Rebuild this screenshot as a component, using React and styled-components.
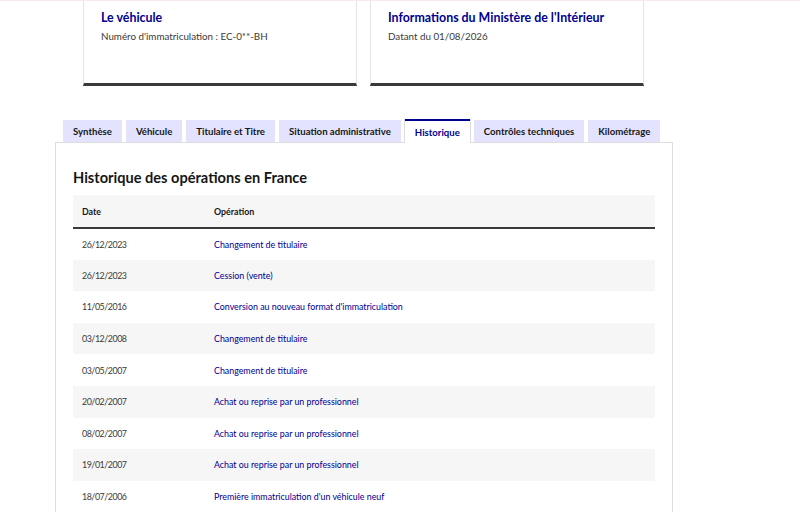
import React from "react";
import styled, { createGlobalStyle } from "styled-components";

const Global = createGlobalStyle`
  html, body { margin: 0; padding: 0; background: #fff; }
  body { font-family: Lato, "Noto Sans", sans-serif; color: #161616; }
  * { box-sizing: border-box; }
`;

const Page = styled.div`
  border-top: 1px solid #f4e9ee;
  width: 800px;
  height: 512px;
  overflow: hidden;
`;

const Cards = styled.div`
  display: flex;
  gap: 13px;
  padding-left: 83px;
`;

const Card = styled.div`
  width: 274px;
  height: 85px;
  border: 1px solid #e5e5e5;
  border-top: none;
  border-bottom: 3px solid #3a3a3a;
  padding: 8px 17px 0;
`;

const CardTitle = styled.div`
  font-size: 12.4px;
  font-weight: 700;
  color: #000091;
  line-height: 18px;
`;

const CardText = styled.div`
  margin-top: 1px;
  font-size: 9.8px;
  color: #3a3a3a;
  line-height: 16px;
`;

const Tabs = styled.div`
  display: flex;
  gap: 4px;
  margin: 33px 0 0 63px;
  position: relative;
  z-index: 1;
`;

const Tab = styled.div`
  height: ${(p) => (p.$active ? "24px" : "22px")};
  margin-top: ${(p) => (p.$active ? "0" : "1px")};
  padding: 0 10px;
  display: flex;
  align-items: center;
  font-size: 9.6px;
  font-weight: 700;
  color: ${(p) => (p.$active ? "#000091" : "#161616")};
  background: ${(p) => (p.$active ? "#fff" : "#e3e3fd")};
  border-top: ${(p) => (p.$active ? "2px solid #000091" : "none")};
  box-shadow: ${(p) => (p.$active ? "-1px 0 0 #ddd, 1px 0 0 #ddd" : "none")};
`;

const Panel = styled.div`
  margin: -1px 0 0 55px;
  width: 618px;
  height: 400px;
  border: 1px solid #dddddd;
  padding: 24px 17px 0;
`;

const Heading = styled.h2`
  margin: 0 0 6px;
  font-size: 14.6px;
  font-weight: 700;
  line-height: 22px;
  color: #161616;
`;

const Table = styled.table`
  width: 582px;
  border-collapse: collapse;
  font-size: 8.85px;
`;

const Th = styled.th`
  text-align: left;
  font-weight: 700;
  height: 33px;
  padding: 0 9px;
  background: #f6f6f6;
  border-bottom: 2px solid #3a3a3a;
  color: #161616;
  width: ${(p) => p.$w || "auto"};
`;

const Tr = styled.tr`
  height: 31.6px;
  background: ${(p) => (p.$odd ? "#f6f6f6" : "#fff")};
`;

const Td = styled.td`
  padding: 0 9px;
  color: ${(p) => (p.$link ? "#000091" : "#3a3a3a")};
  letter-spacing: ${(p) => (p.$link ? "0" : "-0.45px")};
`;

const rows = [
  ["26/12/2023", "Changement de titulaire"],
  ["26/12/2023", "Cession (vente)"],
  ["11/05/2016", "Conversion au nouveau format d'immatriculation"],
  ["03/12/2008", "Changement de titulaire"],
  ["03/05/2007", "Changement de titulaire"],
  ["20/02/2007", "Achat ou reprise par un professionnel"],
  ["08/02/2007", "Achat ou reprise par un professionnel"],
  ["19/01/2007", "Achat ou reprise par un professionnel"],
  ["18/07/2006", "Première immatriculation d'un véhicule neuf"],
];

const tabs = [
  "Synthèse",
  "Véhicule",
  "Titulaire et Titre",
  "Situation administrative",
  "Historique",
  "Contrôles techniques",
  "Kilométrage",
];

export default function App() {
  return (
    <Page>
      <Global />
      <Cards>
        <Card>
          <CardTitle>Le véhicule</CardTitle>
          <CardText>Numéro d'immatriculation : EC-0**-BH</CardText>
        </Card>
        <Card>
          <CardTitle>Informations du Ministère de l'Intérieur</CardTitle>
          <CardText>Datant du 01/08/2026</CardText>
        </Card>
      </Cards>
      <Tabs>
        {tabs.map((t) => (
          <Tab key={t} $active={t === "Historique"}>
            {t}
          </Tab>
        ))}
      </Tabs>
      <Panel>
        <Heading>Historique des opérations en France</Heading>
        <Table>
          <thead>
            <tr>
              <Th $w="132px">Date</Th>
              <Th>Opération</Th>
            </tr>
          </thead>
          <tbody>
            {rows.map(([d, o], i) => (
              <Tr key={i} $odd={i % 2 === 1}>
                <Td>{d}</Td>
                <Td $link>{o}</Td>
              </Tr>
            ))}
          </tbody>
        </Table>
      </Panel>
    </Page>
  );
}
